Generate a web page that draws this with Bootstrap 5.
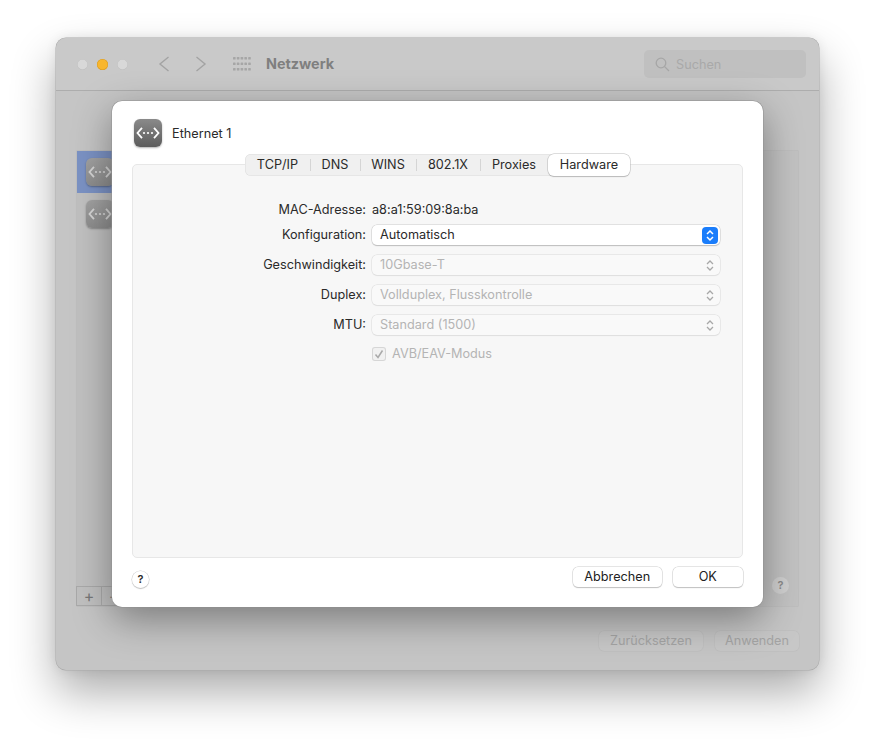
<!doctype html>
<html lang="de"><head><meta charset="utf-8"><title>Netzwerk</title>
<link href="https://cdn.jsdelivr.net/npm/bootstrap@5.3.0/dist/css/bootstrap.min.css" rel="stylesheet">
<style>
html,body{height:744px;overflow:hidden;background:#fff}
body{font-family:Inter,"Liberation Sans",sans-serif;font-size:12.7px;color:#2a2a2a;padding:38px 0 0 56px}
.mac-win{position:relative;width:763px;height:632px;background:#c5c5c5;border-radius:10px;box-shadow:0 0 0 .5px #a9a9a9,0 22px 45px rgba(0,0,0,.33),0 0 12px rgba(0,0,0,.08)}
.mac-title{height:53px;background:#c9c9c9;border-bottom:1px solid #adadad;border-radius:10px 10px 0 0;padding:0 13px 0 21px}
.light{width:11px;height:11px;border-radius:50%;background:#d8d8d8;box-shadow:inset 0 0 0 .5px #bdbdbd}
.light.amber{background:#f8b62d;box-shadow:inset 0 0 0 .5px #d99a20}
.lights{gap:9px;width:51px}
.nav-g{margin-left:30px;gap:25px}
.grid-g{margin-left:26px}
.mac-name{margin-left:15px;font-size:14.4px;font-weight:700;color:#7f7f7f}
.mac-search{width:162px;height:28px;border-radius:5px;background:#c0c0c0;color:#a9a9a9;padding-left:11px;gap:6px;margin-left:auto}
.mac-search span{position:relative;top:1px}
.mac-body{padding:60px 21px 0;}
.mac-panes{height:455px;gap:0}
.side-pane{width:200px;background:#c0c0c0;box-shadow:0 0 0 .5px #b8b8b8}
.side-row{height:42px;padding-left:9px}
.side-row.sel{background:#7b92c4}
.side-foot{height:20px;border:1px solid #a9a9a9;width:76px;color:#777;margin-left:-1px}
.side-foot span{width:25px;text-align:center;font-size:16px;line-height:18px;border-right:1px solid #a9a9a9}
.main-pane{background:#c2c2c2;box-shadow:0 0 0 .5px #b8b8b8;padding:0 9px 12px 0}
.q-dim{width:17px;height:17px;border-radius:50%;background:#d0d0d0;color:#8a8a8a;font-size:11px;font-weight:600;line-height:17px;text-align:center}
.mac-actions{gap:12px;padding-top:25px;margin-right:-1px}
.act-dim{height:20px;border-radius:5px;background:#c7c7c7;box-shadow:0 0 0 .5px #bcbcbc;color:#a4a4a4;line-height:19px;text-align:center}
.act-reset{width:104px}.act-apply{width:84px}
.sheet-dlg{position:absolute;left:56px;top:63px;width:651px;height:506px;background:#fff;border-radius:10px;box-shadow:0 0 0 .5px #8f8f8f,0 12px 38px rgba(0,0,0,.38);padding:18px 20px 0}
.sheet-head{margin-left:2px;gap:10px;height:28px}
.sheet-head>span{position:relative;top:1px}
.sheet-head .eth-ic{width:28px;height:28px}
.eth-ic{border-radius:6px;background:linear-gradient(#8a8a8a,#5c5c5c);box-shadow:0 1px 2px rgba(0,0,0,.3);flex:none}
.eth-ic.dim{width:28px;height:28px;background:linear-gradient(#a2a2a2,#8d8d8d)}
.tab-area{position:relative;margin-top:17px;height:394px;background:#f7f7f7;border:1px solid #e7e7e7;border-radius:5px;padding-top:34px}
.seg-bar{position:absolute;left:112px;top:-11px;height:22px;width:385px;background:#f0f0f0;border-radius:6px;box-shadow:inset 0 0 0 .5px #dcdcdc}
.seg-i{height:22px;line-height:22px;text-align:center;position:relative}
.seg-i+.seg-i::before{content:"";position:absolute;left:0;top:5px;height:12px;width:1px;background:#d5d5d5}
.seg-i.on{background:#fff;border-radius:6px;box-shadow:0 0 0 .5px #bbb,0 1px 1px rgba(0,0,0,.25)}
.seg-i.on::before{display:none}
.w-tcp{width:65px}.w-dns{width:50px}.w-wins{width:56px}.w-dot{width:64px}.w-prox{width:68px}.w-hw{width:82px}
.form-r{height:22px;margin-bottom:8px}
.form-r.mac-r{margin-bottom:3px}
.lab{width:233px;text-align:right;flex:none;margin-right:5px}
.pop{width:348px;height:20.500px;border-radius:5px;padding-left:8px;background:#fff;box-shadow:0 0 0 .5px #ccc,0 1px 1px rgba(0,0,0,.28);position:relative;margin-left:1px}
.pop.off{background:#f9f9f9;color:#b4b4b4;box-shadow:0 0 0 .5px #dcdcdc,0 .5px 1px rgba(0,0,0,.08)}
.pop-ar{width:16px;height:17px;margin-right:2px;border-radius:4px;flex:none}
.pop-ar.blue{background:#1a7dfb}
.mac-val{margin-left:1px}
.cb-row{padding-left:239px;gap:6px;color:#b4b4b4;margin-top:0}
.cb-box{width:14px;height:14px;border-radius:3px;background:#f1f1f1;box-shadow:inset 0 0 0 1px #d6d6d6}
.sheet-foot{padding-top:9px}
.q-b{width:17px;height:17px;border-radius:50%;background:#fff;box-shadow:0 0 0 .5px #ccc,0 1px 1px rgba(0,0,0,.25);font-size:11px;font-weight:600;line-height:17px;text-align:center;margin-top:4px}
.dlg-g{gap:11px;margin-left:auto}
.dlg-b{height:20px;line-height:20px;text-align:center;background:#fff;border-radius:5px;box-shadow:0 0 0 .5px #ccc,0 1px 1px rgba(0,0,0,.28);color:#222}
.b-can{width:88.500px}.b-ok{width:70.500px}
</style></head><body>
<svg width="0" height="0" class="position-absolute"><defs><symbol id="eth" viewBox="0 0 24 12"><path d="M6 .8 1.500 6 6 11.200M18 .8 22.500 6 18 11.200" fill="none" stroke-width="1.800"/><circle cx="8" cy="6" r="1.100" stroke="none"/><circle cx="12" cy="6" r="1.100" stroke="none"/><circle cx="16" cy="6" r="1.100" stroke="none"/></symbol></defs></svg>
<div class="mac-win">
 <div class="mac-title d-flex align-items-center">
  <div class="lights d-flex"><i class="light"></i><i class="light amber"></i><i class="light"></i></div>
  <div class="nav-g d-flex">
   <svg width="12" height="16" viewBox="0 0 12 16"><path d="M10.500 1 2 8l8.500 7" fill="none" stroke="#a3a3a3" stroke-width="1.400"/></svg>
   <svg width="12" height="16" viewBox="0 0 12 16"><path d="M1.500 1 10 8l-8.500 7" fill="none" stroke="#a3a3a3" stroke-width="1.400"/></svg>
  </div>
  <svg class="grid-g" width="18" height="14" viewBox="0 0 18 14" fill="#a6a6a6"><g id="gr"><rect x="0" y="0" width="2.600" height="2.600" rx=".6"/><rect x="3.800" y="0" width="2.600" height="2.600" rx=".6"/><rect x="7.600" y="0" width="2.600" height="2.600" rx=".6"/><rect x="11.400" y="0" width="2.600" height="2.600" rx=".6"/><rect x="15.200" y="0" width="2.600" height="2.600" rx=".6"/></g><use href="#gr" y="5.500"/><use href="#gr" y="11"/></svg>
  <div class="mac-name">Netzwerk</div>
  <div class="mac-search d-flex align-items-center">
   <svg width="15" height="15" viewBox="0 0 15 15" fill="none" stroke="#a6a6a6" stroke-width="1.300"><circle cx="6" cy="6" r="4.800"/><path d="m9.600 9.600 4.400 4.400"/></svg><span>Suchen</span>
  </div>
 </div>
 <div class="mac-body">
  <div class="mac-panes d-flex">
   <div class="side-pane d-flex flex-column">
    <div class="side-row sel d-flex align-items-center"><div class="eth-ic dim d-flex align-items-center justify-content-center"><svg width="24" height="12" fill="#d6d6d6" stroke="#d6d6d6"><use href="#eth"/></svg></div></div>
    <div class="side-row d-flex align-items-center"><div class="eth-ic dim d-flex align-items-center justify-content-center"><svg width="24" height="12" fill="#d6d6d6" stroke="#d6d6d6"><use href="#eth"/></svg></div></div>
    <div class="side-foot d-flex mt-auto"><span>+</span><span>−</span></div>
   </div>
   <div class="main-pane flex-grow-1 d-flex align-items-end justify-content-end"><div class="q-dim">?</div></div>
  </div>
  <div class="mac-actions d-flex justify-content-end"><div class="act-dim act-reset">Zurücksetzen</div><div class="act-dim act-apply">Anwenden</div></div>
 </div>

 <div class="sheet-dlg d-flex flex-column">
  <div class="sheet-head d-flex align-items-center">
   <div class="eth-ic d-flex align-items-center justify-content-center"><svg width="24" height="12" fill="#fff" stroke="#fff"><use href="#eth"/></svg></div>
   <span>Ethernet 1</span>
  </div>
  <div class="tab-area">
   <div class="seg-bar d-flex">
    <div class="seg-i w-tcp">TCP/IP</div><div class="seg-i w-dns">DNS</div><div class="seg-i w-wins">WINS</div><div class="seg-i w-dot">802.1X</div><div class="seg-i w-prox">Proxies</div><div class="seg-i w-hw on">Hardware</div>
   </div>
   <div class="form-r mac-r d-flex align-items-center"><div class="lab">MAC-Adresse:</div><div class="mac-val">a8:a1:59:09:8a:ba</div></div>
   <div class="form-r d-flex align-items-center"><div class="lab">Konfiguration:</div><div class="pop d-flex align-items-center justify-content-between"><span>Automatisch</span><span class="pop-ar blue d-flex align-items-center justify-content-center"><svg width="10" height="13" viewBox="0 0 10 13" fill="none" stroke="#fff" stroke-width="1.500"><path d="m2 5 3-3 3 3M2 8l3 3 3-3"/></svg></span></div></div>
   <div class="form-r d-flex align-items-center"><div class="lab">Geschwindigkeit:</div><div class="pop off d-flex align-items-center justify-content-between"><span>10Gbase-T</span><span class="pop-ar d-flex align-items-center justify-content-center"><svg width="10" height="13" viewBox="0 0 10 13" fill="none" stroke="#a8a8a8" stroke-width="1.300"><path d="m2 5 3-3 3 3M2 8l3 3 3-3"/></svg></span></div></div>
   <div class="form-r d-flex align-items-center"><div class="lab">Duplex:</div><div class="pop off d-flex align-items-center justify-content-between"><span>Vollduplex, Flusskontrolle</span><span class="pop-ar d-flex align-items-center justify-content-center"><svg width="10" height="13" viewBox="0 0 10 13" fill="none" stroke="#a8a8a8" stroke-width="1.300"><path d="m2 5 3-3 3 3M2 8l3 3 3-3"/></svg></span></div></div>
   <div class="form-r d-flex align-items-center"><div class="lab">MTU:</div><div class="pop off d-flex align-items-center justify-content-between"><span>Standard (1500)</span><span class="pop-ar d-flex align-items-center justify-content-center"><svg width="10" height="13" viewBox="0 0 10 13" fill="none" stroke="#a8a8a8" stroke-width="1.300"><path d="m2 5 3-3 3 3M2 8l3 3 3-3"/></svg></span></div></div>
   <div class="cb-row d-flex align-items-center"><span class="cb-box d-flex align-items-center justify-content-center"><svg width="10" height="10" viewBox="0 0 10 10" fill="none" stroke="#a9a9a9" stroke-width="1.500"><path d="m1.500 5.500 2.500 3 4.500-7"/></svg></span><span>AVB/EAV-Modus</span></div>
  </div>
  <div class="sheet-foot d-flex align-items-start">
   <div class="q-b">?</div>
   <div class="dlg-g d-flex"><div class="dlg-b b-can">Abbrechen</div><div class="dlg-b b-ok">OK</div></div>
  </div>
 </div>
</div>
<script src="https://cdn.jsdelivr.net/npm/bootstrap@5.3.0/dist/js/bootstrap.bundle.min.js"></script>
</body></html>
